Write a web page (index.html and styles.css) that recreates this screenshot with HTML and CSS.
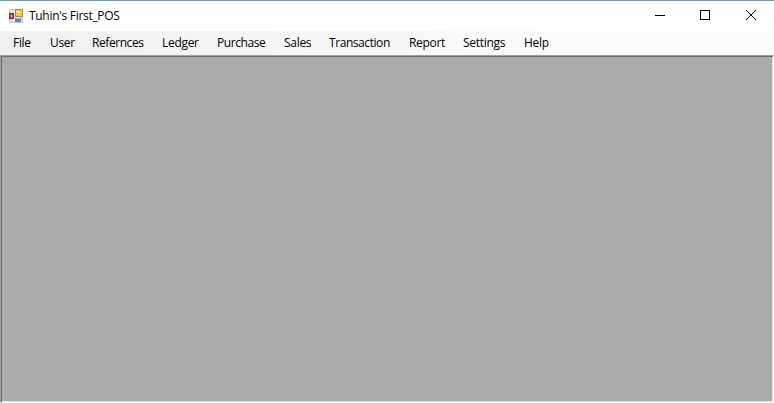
FILE: index.html
```html
<!DOCTYPE html>
<html lang="en">
<head>
<meta charset="utf-8">
<title>Tuhin's First_POS</title>
<link rel="stylesheet" href="styles.css">
</head>
<body>
<div class="window">
  <header class="titlebar">
    <svg class="app-icon" width="14" height="14" viewBox="0 0 14 14">
      <rect x=".5" y=".5" width="13" height="13" fill="#eef1f5" stroke="#c3c5ca"/>
      <path d="M3 1v12M1 3h5M1 11h12" stroke="#d5d8de"/>
      <rect x="6.500" y=".5" width="7" height="7" fill="#f3cb45" stroke="#a58a42"/>
      <rect x="8" y="2" width="3" height="2" fill="#ffe685"/>
      <rect x=".5" y="4.500" width="4" height="5" fill="#cf4a42" stroke="#8d2c2c"/>
      <rect x="2" y="6" width="1" height="2" fill="#f5a89c"/>
      <rect x="6" y="9" width="6" height="4" fill="#5688c4"/>
      <rect x="7" y="9" width="4" height="1" fill="#86b3e4"/>
    </svg>
    <h1 class="title">Tuhin's First_POS</h1>
    <div class="controls">
      <svg width="46" height="29" viewBox="0 0 46 29"><path d="M18 14.500h10" stroke="#000"/></svg>
      <svg width="46" height="29" viewBox="0 0 46 29"><rect x="18.500" y="9.500" width="9" height="9" fill="none" stroke="#000"/></svg>
      <svg width="46" height="29" viewBox="0 0 46 29"><path d="M18 9l10 10M28 9L18 19" stroke="#000"/></svg>
    </div>
  </header>
  <nav class="menu">
    <span>File</span><span>User</span><span class="tight">Refernces</span><span>Ledger</span><span class="tight">Purchase</span><span>Sales</span><span class="tight">Transaction</span><span>Report</span><span>Settings</span><span>Help</span>
  </nav>
  <main class="workspace"></main>
</div>
</body>
</html>
```
FILE: styles.css
```css
* { box-sizing: border-box; }
body { margin: 0; overflow: hidden; }
.window {
  height: 403px;
  display: flex;
  flex-direction: column;
  border-top: 1px solid #5a9bc9;
  background: #fff;
  color: #000;
  font: 12px/16px "Open Sans", "Noto Sans", sans-serif;
}
.titlebar { height: 30px; flex: none; display: flex; align-items: center; padding-left: 9px; }
.app-icon { flex: none; margin-bottom: 1px; }
.title { margin: 0 0 0 6px; font-size: 12px; font-weight: 400; letter-spacing: -0.3px; }
.controls { display: flex; height: 29px; margin: 0 0 1px auto; align-self: flex-start; }
.controls svg { display: block; }
.controls svg:first-child { margin-right: -1px; }
.menu {
  height: 24px;
  flex: none;
  display: grid;
  grid-template-columns: 37px 42px 70px 55px 67px 45px 80px 54px 61px 60px;
  align-items: center;
  padding-left: 13px;
  background: linear-gradient(90deg, #f0f0f0, #fcfcfc 80%);
  letter-spacing: -0.3px;
}
.tight { letter-spacing: -0.43px; }
.workspace {
  flex: 1;
  border: 1px solid #a0a0a0;
  border-right-color: #fff;
  border-bottom-color: #fff;
  background: #ababab;
  box-shadow: inset 1px 1px #696969, inset -1px -1px #e3e3e3;
}
```
